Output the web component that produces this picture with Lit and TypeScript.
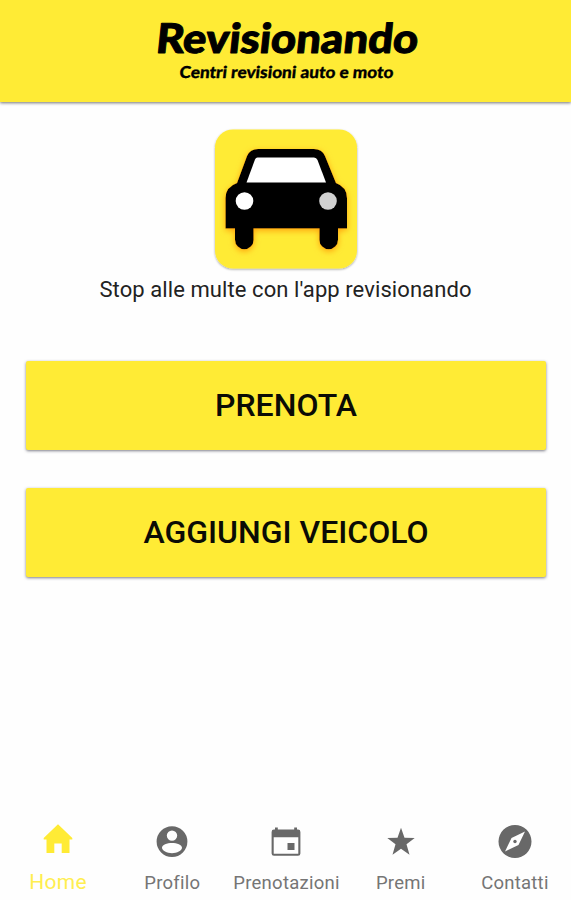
import { LitElement, html, svg, css } from "lit";
import { customElement } from "lit/decorators.js";

const icons = [
  svg`<path d="M22 6.300 36.300 20v1.600H33.500V35H25.700V25.500H18.300V35H10.500V21.600H7.700V20z"/>`,
  svg`<path fill-rule="evenodd" d="M22 6.200a15.400 15.400 0 1 0 0 30.800 15.400 15.400 0 0 0 0-30.800zM22 10.400a5.200 5.200 0 1 1 0 10.400 5.200 5.200 0 0 1 0-10.400zM22 23c5 0 10 2 10 4.800 0 3-5 5.400-10 5.400s-10-2.400-10-5.400c0-2.800 5-4.800 10-4.800z"/>`,
  svg`<path fill-rule="evenodd" d="M11 7.500h2.800V9.500h16.400V7.500h2.800V9.500h1q2.400 0 2.400 2.400v21.500q0 2.400-2.400 2.400H10q-2.400 0-2.400-2.400v-21.500Q7.600 9.500 10 9.500h1zM9.700 17.200v16.500h24.600V17.200zM23.500 23h7v7h-7z"/>`,
  svg`<path d="M22 7.700l3.500 10 10.200.3-8.200 6.300 3 10.500L22 28.700l-8.500 6.100 3-10.500L8.300 18l10.200-.3z"/>`,
  svg`<path fill-rule="evenodd" d="M22 5a16.500 16.500 0 1 0 0 33 16.500 16.500 0 0 0 0-33zM32 11.500 25.500 25 12 31.500 18.500 18z"/><circle cx="22" cy="21.500" r="1.700"/>`,
];
const labels = ["Home", "Profilo", "Prenotazioni", "Premi", "Contatti"];

@customElement("app-root")
export class AppRoot extends LitElement {
  static styles = css`
    :host { display: flex; flex-direction: column; height: 900px; background: #fefefe; font-family: Roboto, sans-serif; color: #111; overflow: hidden; }
    header { height: 102px; flex: none; background: #ffeb35; box-shadow: 0 1px 3px rgba(0,0,0,.55); }
    .brand { display: block; margin: 0 auto; width: 571px; height: 102px; font-family: Lato, sans-serif; font-weight: 900; }
    .brand text { stroke: #000; stroke-linejoin: round; }
    main { flex: 1; display: flex; flex-direction: column; align-items: center; padding-top: 26px; }
    .logo { width: 146px; height: 144px; display: block; }
    .tag { margin: 5px 0 0; font-size: 22px; line-height: 26px; height: 26px; letter-spacing: .08px; white-space: nowrap; color: #222; }
    .actions { margin-top: 58px; padding-left: 1px; display: flex; flex-direction: column; gap: 38px; }
    button { width: 520px; height: 89px; border: 0; padding: 0; border-radius: 2px; background: #ffeb35; font: 500 32px/89px Roboto, sans-serif; color: #0b0b05; box-shadow: 0 1px 3px rgba(40,40,60,.6); }
    nav { height: 84px; flex: none; display: grid; grid-template-columns: repeat(5, 1fr); padding-left: 1px; margin-right: -1px; }
    .tab { display: flex; flex-direction: column; align-items: center; color: #757575; fill: #686868; }
    .tab svg { width: 44px; height: 44px; margin-top: 4px; flex: none; }
    .tab span { font-size: 18.500px; line-height: 24px; margin-top: 7px; white-space: nowrap; letter-spacing: .25px; }
    .tab.active { color: #ffee50; fill: #ffeb35; }
    .tab.active svg { margin-top: 2px; }
    .tab.active span { font-size: 21px; margin-top: 8px; }
  `;
  render() {
    return html`
      <header>
        <svg class="brand" viewBox="0 0 571 102">
          <text transform="translate(155 53) skewX(-6)" font-size="41" stroke-width="1" textLength="262" lengthAdjust="spacingAndGlyphs">Revisionando</text>
          <text transform="translate(179 77.500) skewX(-6)" font-size="16.500" stroke-width=".3" textLength="214" lengthAdjust="spacingAndGlyphs">Centri revisioni auto e moto</text>
        </svg>
      </header>
      <main>
        <svg class="logo" viewBox="213 128 146 144">
          <defs>
            <filter id="soft" x="-20%" y="-20%" width="140%" height="140%"><feDropShadow dx="0" dy="2" stdDeviation="3" flood-color="#ff8f00" flood-opacity=".8"/></filter>
            <filter id="edge"><feDropShadow dx="0" dy="1" stdDeviation=".8" flood-opacity=".35"/></filter>
          </defs>
          <rect x="215" y="129.500" width="142" height="139" rx="18" fill="#ffeb35" filter="url(#edge)"/>
          <g filter="url(#soft)">
            <path d="M258 149H314Q322 149 325 156L336 183Q347 187 347 198V228.500H338V240a9.300 9.300 0 0 1-18.600 0V228.500H253.600V240a9.300 9.300 0 0 1-18.600 0V228.500H225.500V198Q225.500 187 237 183L247 156Q250 149 258 149Z"/>
          </g>
          <path d="M257.500 157.500H314Q316.500 157.500 317.500 160L326 182.500H246.500L255 159.500Q255.800 157.500 257.500 157.500Z" fill="#fff"/>
          <circle cx="244.500" cy="201" r="8.800" fill="#fff"/><circle cx="328" cy="201" r="8.800" fill="#d0d0d0"/>
        </svg>
        <p class="tag">Stop alle multe con l'app revisionando</p>
        <div class="actions"><button>PRENOTA</button><button>AGGIUNGI VEICOLO</button></div>
      </main>
      <nav>${labels.map((l, i) => html`<div class="tab ${i === 0 ? "active" : ""}"><svg viewBox="0 0 44 44">${icons[i]}</svg><span>${l}</span></div>`)}</nav>
    `;
  }
}
